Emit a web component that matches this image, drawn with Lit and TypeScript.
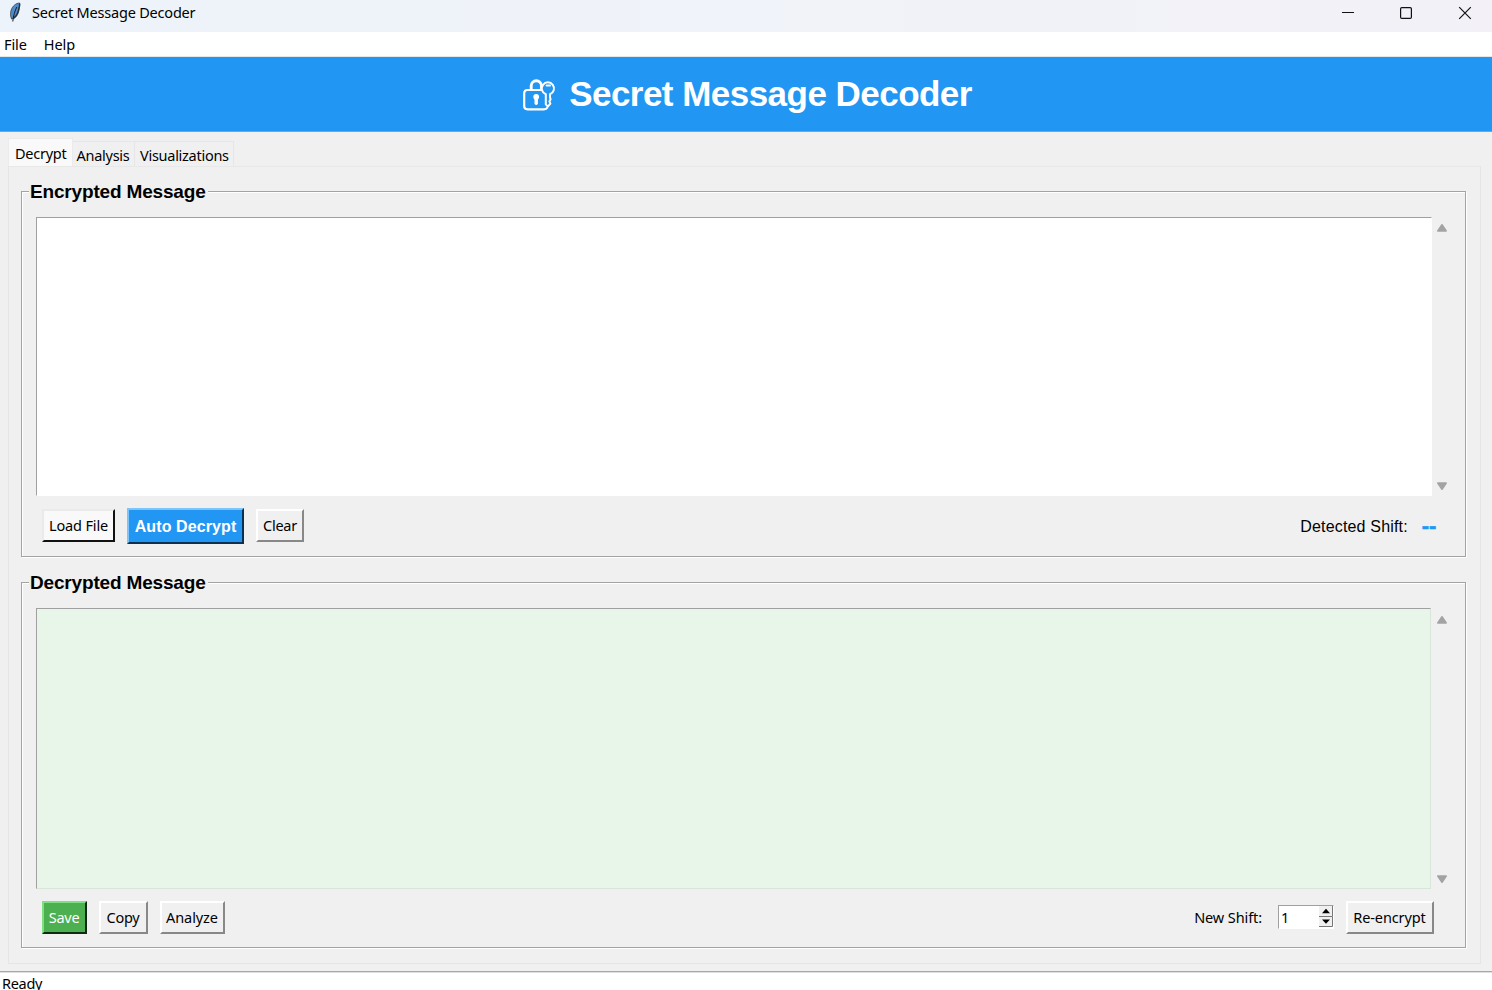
import { LitElement, html, css } from "lit";
import { customElement, property } from "lit/decorators.js";

@customElement("scroll-bar")
class ScrollBar extends LitElement {
  static styles = css`
    :host { display: flex; flex-direction: column; justify-content: space-between; width: 12px; }
    svg { display: block; width: 12px; height: 10px; fill: #a3a3a3; stroke: #a3a3a3; stroke-width: 1.6; stroke-linejoin: round; }
  `;
  render() {
    return html`
      <svg viewBox="0 0 12 10"><path d="M6 1.8 L10.2 7.9 H1.8Z" /></svg>
      <svg viewBox="0 0 12 10"><path d="M6 8.2 L10.2 2.1 H1.8Z" /></svg>
    `;
  }
}

@customElement("group-frame")
class GroupFrame extends LitElement {
  @property() label = "";
  static styles = css`
    :host { display: block; box-sizing: border-box; position: relative; border: 1px solid #a3a3a3; box-shadow: 1px 1px 0 #fff, inset 1px 1px 0 #fff; }
    .label { position: absolute; left: 7px; top: -11px; height: 22px; padding: 0 2px 0 1px; background: #f0f0f0; color: #000; font: bold 19px/22px "Liberation Sans", Arial, sans-serif; white-space: nowrap; letter-spacing: -0.17px; }
  `;
  render() {
    return html`<span class="label">${this.label}</span><slot></slot>`;
  }
}

@customElement("app-root")
class AppRoot extends LitElement {
  static styles = css`
    :host { display: flex; flex-direction: column; width: 1492px; height: 990px; overflow: hidden; background: #f0f0f0; color: #000; font: 14.5px/20px "Noto Sans", "Open Sans", sans-serif; letter-spacing: -0.25px; }
    * { box-sizing: border-box; white-space: nowrap; }
    .titlebar { display: flex; align-items: center; height: 32px; flex: none; background: linear-gradient(90deg, #edf3fa, #f0f3f9 50%, #f3f1f7); padding: 0 20px 6px 7px; }
    .feather { width: 16px; height: 22px; margin: -2px 9px 0 0; }
    .caption { flex: 1; letter-spacing: -0.2px; margin-top: -2px; }
    .win { width: 14px; height: 14px; margin-left: 45px; fill: none; stroke: #111; }
    .menu { display: flex; gap: 17px; height: 25px; flex: none; background: #fff; border-bottom: 1px solid #e6e6e6; padding: 2px 0 0 4px; letter-spacing: -0.1px; }
    .banner { display: flex; align-items: center; justify-content: center; height: 75px; flex: none; background: #2196f3; color: #fff; border-bottom: 1px solid #55aef5; padding-left: 2px; }
    .lock { width: 34px; height: 34px; margin-right: 13px; margin-top: 2px; }
    .heading { font: bold 35px/40px "Liberation Sans", Arial, sans-serif; letter-spacing: -0.53px; }
    .tabs { display: flex; align-items: flex-end; height: 34px; flex: none; padding-left: 8px; }
    .tab { height: 25px; border: 1px solid #e6e6e6; border-left: 0; border-bottom: 0; padding: 3px 4px 0 4px; letter-spacing: -0.27px; }
    .tab.active { height: 28px; background: #f9f9f9; border: 1px solid #ebebeb; border-bottom: 0; width: 65px; padding: 4px 0 0 6px; }
    .w1 { width: 62px; padding-left: 3.5px; }
    .w2 { width: 99px; padding-left: 5px; }
    .pane { width: 1473px; height: 798px; flex: none; margin-left: 8px; border: 1px solid #e5e5e5; border-top-color: #e8e8e8; padding: 24px 14px 0 12px; }
    .g1 { height: 366px; }
    .g2 { height: 366px; margin-top: 25px; }
    .edit { display: flex; padding: 25px 0 0 14px; }
    .area { width: 1396px; height: 279px; border: 1px solid #a0a0a0; border-right-color: #fff; border-bottom-color: #fff; background: #fff; }
    .area.green { width: 1395px; height: 281px; background: #e8f5e9; border-right-color: #d8e5da; border-bottom-color: #d8e5da; }
    .edit scroll-bar { margin: 6px 0 5px 4px; }
    .edit .s2 { margin: 7px 0 5px 5px; }
    .row { display: flex; align-items: flex-start; padding: 12px 31px 0 20px; height: 48px; }
    .btn { height: 33px; border: 2px solid; border-color: #fff #888 #888 #fff; background: #f0f0f0; display: flex; align-items: center; justify-content: center; margin-right: 12px; padding-bottom: 1px; }
    .load, .clear { margin-top: 1px; }
    .load { width: 73px; background: #f9f9f9; border-color: #eaeaea #111 #111 #eaeaea; letter-spacing: -0.15px; }
    .auto { width: 117px; height: 36px; background: #2196f3; color: #fff; border-color: #7cc4f9 #0c304e #0c304e #7cc4f9; font: bold 16px/20px "Liberation Sans", Arial, sans-serif; letter-spacing: 0.1px; padding: 1px 0 0; }
    .clear { width: 48px; }
    .save { width: 45px; background: #4caf50; color: #fff; border-color: #7ee082 #102a12 #102a12 #7ee082; padding-right: 1px; }
    .copy { width: 49px; padding-right: 1px; }
    .analyze { width: 65px; letter-spacing: -0.1px; padding-right: 1px; }
    .fill { flex: 1; }
    .detected { font: 16px/20px "Liberation Sans", Arial, sans-serif; letter-spacing: 0.18px; margin: 9px 14px 0 0; }
    .shift { color: #2196f3; font: bold 22px/20px "Liberation Sans", Arial, sans-serif; -webkit-text-stroke: 0.5px #2196f3; margin: 8px -2px 0 0; }
    .newshift { margin: 6px 16px 0 0; letter-spacing: -0.1px; }
    .spin { display: flex; justify-content: space-between; width: 56px; height: 24px; background: #fff; border: 1px solid #a0a0a0; border-right-color: #fff; border-bottom-color: #fff; padding-left: 2px; line-height: 22px; margin: 4px 12px 0 0; }
    .arrows { width: 14px; height: 21px; }
    .re { width: 88px; margin-right: 0; letter-spacing: -0.1px; padding-right: 1px; }
    .status { flex: 1; margin-top: 7px; background: #fff; border-top: 1px solid #a8a8a8; box-shadow: inset 0 1px 0 #dedede; padding: 1px 0 0 2px; letter-spacing: -0.3px; }
  `;

  render() {
    return html`
      <div class="titlebar">
        <svg class="feather" viewBox="0 0 16 22">
          <path d="M12.6 2 C9 2.2 5.5 5 4.2 9 C3.2 12 3.4 15.5 4.6 18 L6.8 17.4 C10 15.5 11.4 12.5 12 9 C12.4 6.5 13.2 4 12.6 2Z" fill="#4f8ccc" stroke="#4a5560" stroke-width="1"/>
          <path d="M12.6 2.5 C12.8 5 11.6 8 11.2 10.5 C10.4 13.5 8.5 16 6.4 17.4" stroke="#27313b" stroke-width="1.3" fill="none"/>
          <path d="M9.8 6 C8 10 6.4 14 5.8 20.5" stroke="#1b222a" stroke-width="1" fill="none"/>
        </svg>
        <span class="caption">Secret Message Decoder</span>
        <svg class="win" viewBox="0 0 14 14"><path d="M2 6.5H14" stroke-width="1"/></svg>
        <svg class="win" viewBox="0 0 14 14"><rect x="1.6" y="1.6" width="10.8" height="10.8" rx="1.2" stroke-width="1.2"/></svg>
        <svg class="win" viewBox="0 0 14 14"><path d="M1.2 1.2L12.8 12.8M12.8 1.2L1.2 12.8" stroke-width="1.2"/></svg>
      </div>
      <div class="menu"><span>File</span><span>Help</span></div>
      <div class="banner">
        <svg class="lock" viewBox="0 0 34 34" fill="none" stroke="#fff" stroke-width="2.2" stroke-linejoin="round" stroke-linecap="round">
          <path d="M20 12H5.5Q2.2 12 2.2 15.3V28Q2.2 31.3 5.5 31.3H22Q24.4 31.3 25.2 29.8"/>
          <path d="M9.2 11.5V7.8A5.1 5.1 0 0 1 19.4 7.8V11.5" stroke-width="2.9"/>
          <path d="M23.8 16.2V26.4L25.8 28.6L28.4 25.6L27.4 23.4L28.6 21.2L28 19.4V16.2A6.1 6.1 0 1 0 23.8 16.2Z" fill="#2196f3" stroke-width="2"/>
          <path d="M24.6 7.6H28" stroke-width="2"/>
          <circle cx="14.2" cy="18.8" r="2.1" fill="#fff" stroke-width="1.6"/><path d="M14.2 20V25.2" stroke-width="3.4"/>
        </svg>
        <span class="heading">Secret Message Decoder</span>
      </div>
      <div class="tabs">
        <div class="tab active">Decrypt</div><div class="tab w1">Analysis</div><div class="tab w2">Visualizations</div>
      </div>
      <div class="pane">
        <group-frame class="g1" label="Encrypted Message">
          <div class="edit"><div class="area"></div><scroll-bar></scroll-bar></div>
          <div class="row">
            <div class="btn load">Load File</div><div class="btn auto">Auto Decrypt</div><div class="btn clear">Clear</div>
            <div class="fill"></div><span class="detected">Detected Shift:</span><span class="shift">--</span>
          </div>
        </group-frame>
        <group-frame class="g2" label="Decrypted Message">
          <div class="edit"><div class="area green"></div><scroll-bar class="s2"></scroll-bar></div>
          <div class="row">
            <div class="btn save">Save</div><div class="btn copy">Copy</div><div class="btn analyze">Analyze</div>
            <div class="fill"></div><span class="newshift">New Shift:</span>
            <div class="spin"><span>1</span>
              <svg class="arrows" viewBox="0 0 14 21"><path d="M0 0H14V21H0Z" fill="#f0f0f0"/><path d="M0 10.5H13.5V0M0 20.5H13.5V11" fill="none" stroke="#777"/><path d="M3 7.2 L7 2.8 L11 7.2ZM3 13.4 H11 L7 17.8Z" fill="#000"/></svg>
            </div>
            <div class="btn re">Re-encrypt</div>
          </div>
        </group-frame>
      </div>
      <div class="status">Ready</div>
    `;
  }
}
